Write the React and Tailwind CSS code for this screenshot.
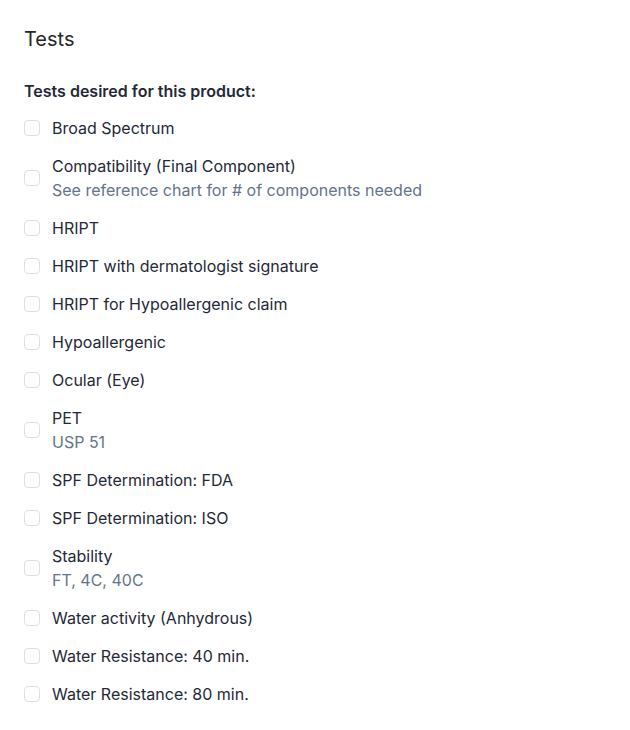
import React from 'react';

const tests = [
  { label: 'Broad Spectrum' },
  { label: 'Compatibility (Final Component)', note: 'See reference chart for # of components needed' },
  { label: 'HRIPT' },
  { label: 'HRIPT with dermatologist signature' },
  { label: 'HRIPT for Hypoallergenic claim' },
  { label: 'Hypoallergenic' },
  { label: 'Ocular (Eye)' },
  { label: 'PET', note: 'USP 51' },
  { label: 'SPF Determination: FDA' },
  { label: 'SPF Determination: ISO' },
  { label: 'Stability', note: 'FT, 4C, 40C' },
  { label: 'Water activity (Anhydrous)' },
  { label: 'Water Resistance: 40 min.' },
  { label: 'Water Resistance: 80 min.' },
];

// Checkbox row
const TestRow = ({ label, note }) => (
  <label className="flex items-center gap-3 cursor-pointer">
    <input
      type="checkbox"
      className="appearance-none w-4 h-4 shrink-0 rounded border border-[#dcdfe5] bg-white"
    />
    <div className="flex flex-col">
      <span className="text-base leading-6 text-[#1f2937]">{label}</span>
      {note && <span className="text-base leading-6 text-[#64748b]">{note}</span>}
    </div>
  </label>
);

export default function App() {
  return (
    <div
      className="bg-white min-h-[730px] px-6 pt-[25px]"
      style={{ fontFamily: 'Inter, "Noto Sans", sans-serif' }}
    >
      <h2 className="text-xl leading-7 text-[#27272a]">Tests</h2>
      <p className="mt-[26px] text-base leading-6 font-semibold text-[#1f2937]">
        Tests desired for this product:
      </p>
      <div className="mt-[13px] flex flex-col gap-[14px]">
        {tests.map((t) => (
          <TestRow key={t.label} {...t} />
        ))}
      </div>
    </div>
  );
}
